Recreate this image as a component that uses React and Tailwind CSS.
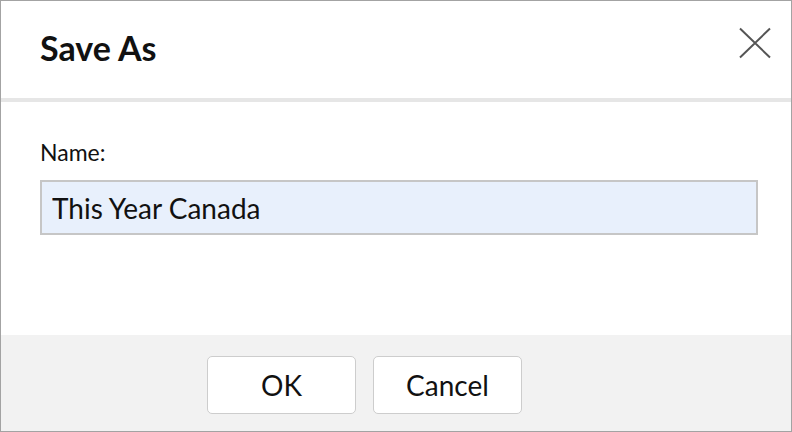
const font = { fontFamily: 'Lato, "Noto Sans", sans-serif' }

const DialogButton = ({ children }) => (
    <button className="w-[149px] h-[58px] bg-white border border-[#cdcdcd] rounded-[5px] text-[28px] text-[#111]">
        {children}
    </button>
)

export default function App() {
    return (
        <div className="w-[792px] h-[432px] bg-white border border-[#a3a3a3] flex flex-col" style={font}>
            <div className="h-[97px] flex items-start justify-between pl-[39px] pr-[20px]">
                <h1 className="text-[34px] font-bold text-[#111] leading-[41px] mt-[26px]">Save As</h1>
                <button className="mt-[26px] text-[#555]">
                    <svg width="32" height="32" viewBox="0 0 32 32" fill="none" stroke="currentColor" strokeWidth="2">
                        <path d="M1 1.5 L31 30.5 M31 1.5 L1 30.5" />
                    </svg>
                </button>
            </div>
            <div className="h-[4px] bg-[#e6e6e6]" />
            <div className="flex-1 px-[39px] pt-[36px]">
                <label className="block text-[23px] text-[#111] leading-[28px]">Name:</label>
                <input
                    defaultValue="This Year Canada"
                    className="mt-[14px] w-[718px] h-[55px] bg-[#e8f0fc] border-2 border-[#c6c6c6] px-[10px] text-[28px] text-[#111] outline-none"
                />
            </div>
            <div className="h-[96px] bg-[#f2f2f2] flex items-start gap-[17px] pl-[206px] pt-[21px]">
                <DialogButton>OK</DialogButton>
                <DialogButton>Cancel</DialogButton>
            </div>
        </div>
    )
}
